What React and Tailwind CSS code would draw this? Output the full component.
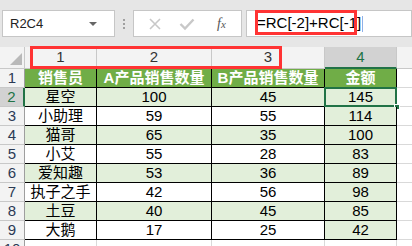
import React from 'react';

const font = { fontFamily: '"Liberation Sans", "Noto Sans CJK SC", sans-serif' };

const rows = [
  ['星空', '100', '45', '145'],
  ['小助理', '59', '55', '114'],
  ['猫哥', '65', '35', '100'],
  ['小艾', '55', '28', '83'],
  ['爱知趣', '53', '36', '89'],
  ['执子之手', '42', '56', '98'],
  ['土豆', '40', '45', '85'],
  ['大鹅', '17', '25', '42'],
];

const widths = ['w-[72px]', 'w-[115px]', 'w-[113px]', 'w-[72px]'];

function RowHead({ n, active }) {
  return (
    <div
      className={`w-[25px] shrink-0 flex items-center justify-center text-[15px] border-b border-[#c8c8c8] ${
        active
          ? 'bg-[#d2d2d2] text-[#217346] border-r-2 border-r-[#217346]'
          : 'bg-[#f3f3f3] text-[#2b3a55] border-r border-r-[#9e9e9e]'
      }`}
    >
      {n}
    </div>
  );
}

export default function App() {
  return (
    <div className="relative w-[412px] h-[246px] overflow-hidden bg-white" style={font}>
      {/* Formula bar */}
      <div className="h-[47px] bg-[#e6e6e6] flex items-start pt-[10px]">
        <div className="ml-[2px] w-[113px] h-[27px] bg-white border border-[#c6c6c6] flex items-center pl-[7px] pr-[17px] justify-between">
          <span className="text-[13px] text-[#222]">R2C4</span>
          <span className="w-0 h-0 border-l-[4px] border-r-[4px] border-t-[4px] border-l-transparent border-r-transparent border-t-[#666]"></span>
        </div>
        <div className="w-[18px] h-[27px] flex flex-col items-center justify-center gap-[2px]">
          <span className="w-[2px] h-[2px] bg-[#a0a0a0]"></span>
          <span className="w-[2px] h-[2px] bg-[#a0a0a0]"></span>
          <span className="w-[2px] h-[2px] bg-[#a0a0a0]"></span>
        </div>
        <div className="w-[109px] h-[27px] bg-white border border-[#c6c6c6] flex items-center">
          <svg width="14" height="14" viewBox="0 0 14 14" className="ml-[14px]">
            <path d="M2 2 L12 12 M12 2 L2 12" stroke="#c8c8c8" strokeWidth="1.6" fill="none" />
          </svg>
          <svg width="16" height="14" viewBox="0 0 16 14" className="ml-[17px]">
            <path d="M1.5 7 L6 11.5 L14.5 2.5" stroke="#c8c8c8" strokeWidth="2.4" fill="none" />
          </svg>
          <span className="ml-[22px] text-[14px] italic text-[#555]" style={{ fontFamily: '"Liberation Serif", serif' }}>
            f<span className="text-[11px]">x</span>
          </span>
        </div>
        <div className="ml-[4px] flex-1 h-[27px] bg-white border border-[#c6c6c6] flex items-center pl-[10px]">
          <span className="text-[15px] text-black">=RC[-2]+RC[-1]</span>
          <span className="ml-[1px] w-[1px] h-[16px] bg-[#8fb0e8]"></span>
        </div>
      </div>

      {/* Column headers */}
      <div className="flex h-[22px] bg-[#f3f3f3]">
        <div className="w-[25px] shrink-0 border-r border-b border-[#c8c8c8] relative">
          <svg width="12" height="12" viewBox="0 0 12 12" className="absolute right-[2px] bottom-[3px]">
            <path d="M12 0 L12 12 L0 12 Z" fill="#b9b9b9" />
          </svg>
        </div>
        {['1', '2', '3'].map((c, i) => (
          <div
            key={c}
            className={`${widths[i]} shrink-0 flex items-center justify-center text-[15px] text-[#333] border-r border-b border-[#c8c8c8]`}
          >
            {c}
          </div>
        ))}
        <div className="w-[72px] shrink-0 flex items-center justify-center text-[15px] text-[#217346] bg-[#d2d2d2] border-r border-r-[#c8c8c8] border-b-2 border-b-[#217346]">
          4
        </div>
        <div className="flex-1 border-b border-[#c8c8c8]"></div>
      </div>

      {/* Header row */}
      <div className="flex h-[19px]">
        <RowHead n="1" />
        {['销售员', 'A产品销售数量', 'B产品销售数量', '金额'].map((t, i) => (
          <div
            key={t}
            className={`${widths[i]} shrink-0 flex items-center justify-center bg-[#70ad47] text-white font-bold text-[15px] border-r border-b border-black`}
          >
            {t}
          </div>
        ))}
        <div className="flex-1 border-b border-[#d9d9d9]"></div>
      </div>

      {rows.map((r, ri) => {
        const shaded = ri % 2 === 0;
        return (
          <div key={ri} className="flex h-[19px]">
            <RowHead n={ri + 2} active={ri === 0} />
            {r.map((v, ci) => (
              <div
                key={ci}
                className={`${widths[ci]} shrink-0 relative flex items-center justify-center text-[15px] text-black border-r border-b border-black ${
                  shaded || ci === 3 ? 'bg-[#e2efda]' : 'bg-white'
                }`}
              >
                {v}
                {ri === 0 && ci === 3 && (
                  <>
                    <div className="absolute -top-[1px] -left-[1px] -right-[1px] -bottom-[1px] border-2 border-[#217346]"></div>
                    <div className="absolute -right-[4px] -bottom-[4px] w-[6px] h-[6px] bg-[#217346] border border-white"></div>
                  </>
                )}
              </div>
            ))}
            <div className="flex-1 border-b border-[#d9d9d9]"></div>
          </div>
        );
      })}

      {/* Row 10 */}
      <div className="flex h-[19px]">
        <RowHead n="10" />
        {widths.map((w, i) => (
          <div key={i} className={`${w} shrink-0 border-r border-b border-[#d9d9d9]`}></div>
        ))}
        <div className="flex-1 border-b border-[#d9d9d9]"></div>
      </div>

      {/* Annotation boxes */}
      <div className="absolute left-[255px] top-[10px] w-[102px] h-[25px] border-[3px] border-[#ff3333]"></div>
      <div className="absolute left-[30px] top-[46px] w-[252px] h-[23px] border-[3px] border-[#ff3333]"></div>
    </div>
  );
}
